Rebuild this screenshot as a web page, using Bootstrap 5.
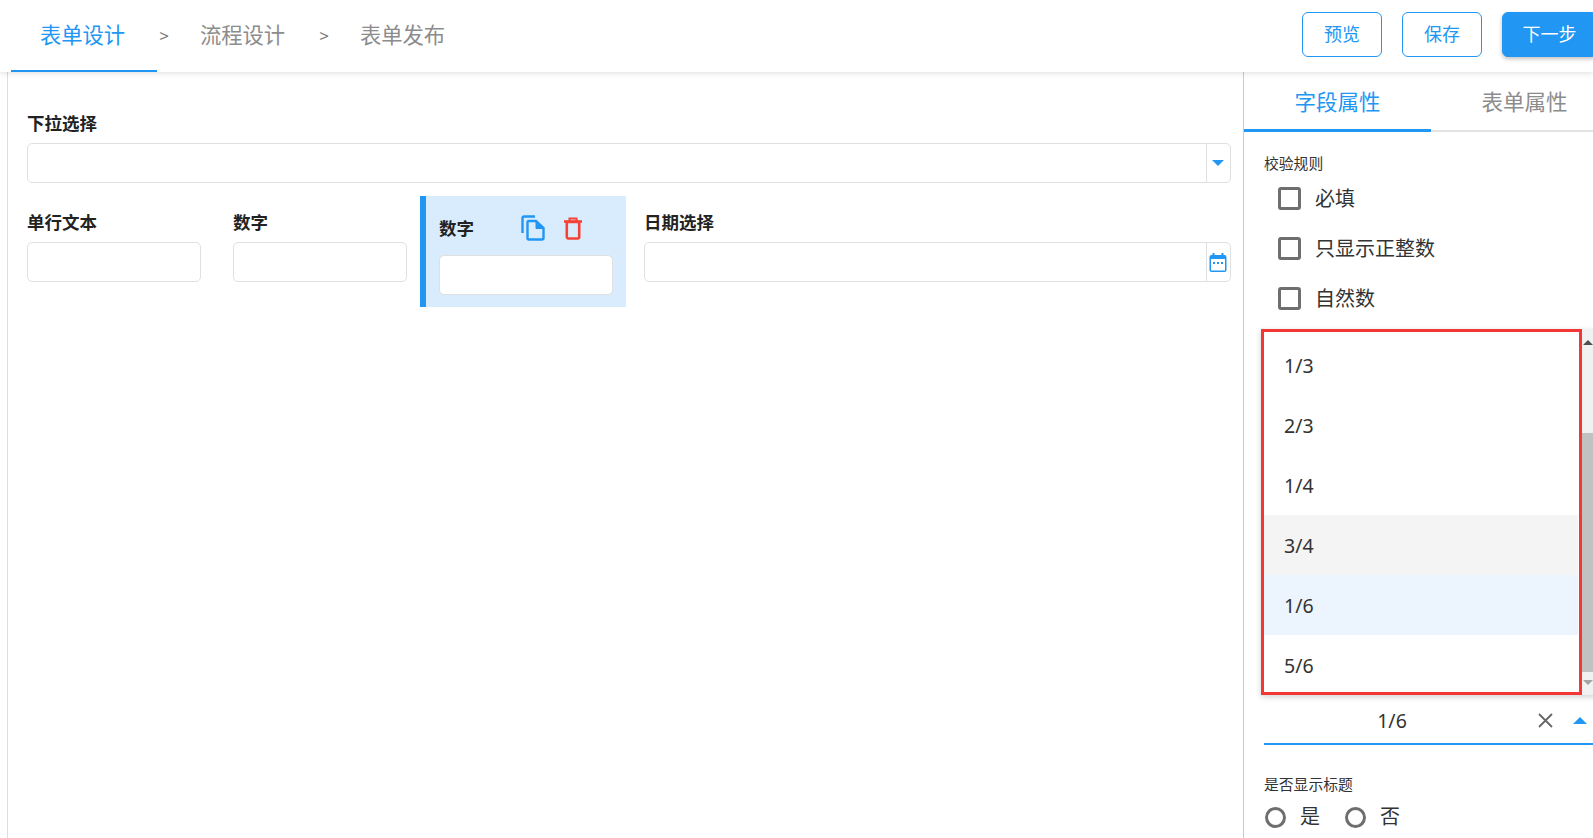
<!DOCTYPE html>
<html lang="zh-CN">
<head>
  <meta charset="UTF-8" />
  <meta name="viewport" content="width=device-width, initial-scale=1.0"/>
  <title>表单设计</title>
  <link href="https://cdn.jsdelivr.net/npm/bootstrap@5.3.0/dist/css/bootstrap.min.css" rel="stylesheet">
  <style>
    html, body { height: 838px; overflow: hidden; }
    body { font-family: "Noto Sans", "Noto Sans CJK SC", sans-serif; color: #333; background: #fff; }

    /* top bar */
    .top-bar { height: 72px; position: relative; z-index: 2; box-shadow: 0 1px 6px rgba(0,0,0,.14); padding-left: 11px; }
    .step-tab { width: 146px; height: 72px; line-height: 70px; padding-right: 3px; text-align: center; font-size: 21.3px; color: #8c8c8c; border-bottom: 2px solid transparent; }
    .step-tab.on { color: #2196f3; border-bottom-color: #2196f3; }
    .step-sep { width: 14px; text-align: center; font-size: 17px; color: #777; line-height: 72px; }
    .step-btn { width: 80px; height: 45px; margin-top: 12px; margin-left: 20px; padding: 0; font-size: 18px; border: 1px solid #2196f3; border-radius: 6px; color: #2196f3; background: #fff; }
    .step-btn.next { width: 95px; flex: none; margin-right: -4px; background: #2196f3; color: #fff; box-shadow: 0 2px 4px rgba(0,0,0,.25); }

    /* canvas */
    .work-area { height: 766px; }
    .canvas-pane { margin-left: 7px; width: 1236px; border-left: 1.5px solid #ddd; }
    .field-label { font-size: 17.5px; font-weight: 700; color: #222; line-height: 24px; }
    .field-box { height: 40px; border: 1px solid #e0e0e0; border-radius: 5px; padding: 0; box-shadow: none; }
    .addon-box { width: 25px; padding: 0 1px 0 0; justify-content: center; background: #fff; border-color: #e0e0e0; border-radius: 0 5px 5px 0; }
    .first-row { padding: 39px 12px 0 19px; }
    .first-row .field-label { margin-bottom: 8px; }
    .field-row { margin-top: 13px; }
    .field-cell { width: 206px; flex: none; height: 111px; padding: 14px 13px 0 19px; }
    .field-cell .field-label { margin-bottom: 8px; }
    .field-cell.wide { width: 618px; padding: 14px 13px 0 18px; }
    .field-cell.picked { background: #d9ecfd; border-left: 6px solid #2196f3; padding: 18px 13px 0 13px; }
    .field-cell.picked .field-label { width: 82px; margin-top: 0; margin-bottom: 0; }
    .field-tools { height: 28px; margin-bottom: 13px; }
    .trash-icon { margin-left: 18px; }
    .caret-down { width: 0; height: 0; border-left: 6px solid transparent; border-right: 6px solid transparent; border-top: 6px solid #2196f3; }

    /* side panel */
    .side-pane { width: 350px; flex: none; border-left: 1.5px solid #ccc; overflow: hidden; }
    .side-tabs { border-bottom: 2px solid #e3e3e3; height: 60px; }
    .side-tab { width: 187px; flex: none; height: 60px; line-height: 60px; margin-bottom: -2px; text-align: center; font-size: 21.5px; color: #8c8c8c; border-bottom: 3px solid transparent; }
    .side-tab.on { color: #2196f3; border-bottom-color: #2196f3; }
    .side-body { padding-left: 20px; width: 360px; }
    .prop-title { font-size: 14.8px; line-height: 20px; color: #333; }
    .rule-title { margin-top: 21px; }
    .rule-list { margin: 1px 0 0 14px; }
    .rule-item { height: 50px; margin: 0; padding: 0; gap: 14px; font-size: 20px; line-height: 22px; color: #333; }
    .rule-item .form-check-input { width: 23px; height: 23px; margin: -2px 0 0; float: none; border: 3px solid #6e6e6e; border-radius: 3px; box-shadow: none; flex: none; }

    .drop-wrap { margin-top: 5px; margin-left: -3px; height: 366px; box-shadow: 0 2px 6px rgba(0,0,0,.18); }
    .drop-list { width: 321px; flex: none; height: 366px; overflow: hidden; border: 3px solid #f33636; padding: 3px 1px 0 0; border-radius: 0; background: #fff; }
    .drop-list .list-group-item { height: 60px; flex: none; line-height: 62px; padding: 0 0 0 20px; font-size: 19.5px; color: #333; border: 0; background: transparent; }
    .drop-list .list-group-item.over { background: #f4f4f4; }
    .drop-list .list-group-item.cur { background: #ecf5fd; }
    .drop-bar { width: 14px; flex: none; background: #f1f1f1; padding-top: 104px; position: relative; }
    .drop-thumb { height: 239px; background: #c1c1c1; }
    .bar-arrow { position: absolute; left: 1px; width: 0; height: 0; border-left: 5px solid transparent; border-right: 5px solid transparent; }
    .bar-arrow.up { top: 11px; border-bottom: 5px solid #505050; }
    .bar-arrow.down { bottom: 10px; border-top: 5px solid #a3a3a3; }

    .value-field { height: 50px; padding-top: 2px; border-bottom: 2px solid #2196f3; font-size: 19.5px; color: #333; }
    .value-text { width: 256px; text-align: center; padding-top: 2px; }
    .value-clear { margin-left: 18px; }
    .caret-up { width: 0; height: 0; margin-left: 20px; border-left: 7px solid transparent; border-right: 7px solid transparent; border-bottom: 7px solid #2196f3; }
    .radio-title { margin-top: 29px; }
    .radio-row { margin-top: 12px; font-size: 20px; line-height: 22px; padding-left: 1px; }
    .radio-row label { gap: 14px; margin-right: 25px; }
    .radio-row .form-check-input { width: 21px; height: 21px; margin: 0; float: none; border: 3px solid #6e6e6e; box-shadow: none; flex: none; }
  </style>
</head>
<body>

<!-- top bar -->
<header class="top-bar d-flex bg-white">
  <div class="step-tab on">表单设计</div>
  <div class="step-sep">&gt;</div>
  <div class="step-tab">流程设计</div>
  <div class="step-sep">&gt;</div>
  <div class="step-tab">表单发布</div>
  <div class="ms-auto d-flex">
    <button class="btn step-btn" type="button">预览</button>
    <button class="btn step-btn" type="button">保存</button>
    <button class="btn step-btn next" type="button">下一步</button>
  </div>
</header>

<div class="work-area d-flex">
  <!-- form canvas -->
  <main class="canvas-pane">
    <div class="first-row">
      <div class="field-label">下拉选择</div>
      <div class="input-group">
        <input class="form-control field-box" type="text">
        <span class="input-group-text addon-box"><span class="caret-down"></span></span>
      </div>
    </div>

    <div class="field-row d-flex">
      <div class="field-cell">
        <div class="field-label">单行文本</div>
        <input class="form-control field-box" type="text">
      </div>
      <div class="field-cell">
        <div class="field-label">数字</div>
        <input class="form-control field-box" type="text">
      </div>
      <div class="field-cell picked">
        <div class="field-tools d-flex align-items-center">
          <div class="field-label">数字</div>
          <svg width="25" height="26" viewBox="0 0 25 26" fill="none" stroke="#2196f3" stroke-width="2.4">
            <path d="M14 1.5H3A1.5 1.5 0 0 0 1.5 3v15"/>
            <path d="M15 6H8a1.5 1.5 0 0 0-1.500 1.500V23A1.500 1.500 0 0 0 8 24.500h13a1.500 1.500 0 0 0 1.500-1.500V13z"/>
            <path d="M15 6l7.500 7.500H15z" fill="#2196f3" stroke-width="1"/>
          </svg>
          <svg class="trash-icon" width="18" height="23" viewBox="0 0 18 23" fill="none" stroke="#f44336" stroke-width="2.6">
            <path d="M0 4.500h18"/>
            <path d="M5.500 4V1.500h7V4" stroke-width="2"/>
            <rect x="2.800" y="5" width="12.400" height="16.500" rx="1.500"/>
          </svg>
        </div>
        <input class="form-control field-box" type="text">
      </div>
      <div class="field-cell wide">
        <div class="field-label">日期选择</div>
        <div class="input-group">
          <input class="form-control field-box" type="text">
          <span class="input-group-text addon-box">
            <svg width="18" height="19" viewBox="0 0 18 19">
              <rect x="0.500" y="2" width="17" height="17" rx="2" fill="#2196f3"/>
              <rect x="3.500" y="0" width="2" height="4" fill="#2196f3"/>
              <rect x="12.500" y="0" width="2" height="4" fill="#2196f3"/>
              <rect x="2" y="6" width="14" height="11.500" fill="#fff"/>
              <rect x="4" y="9" width="2" height="2" fill="#2196f3"/>
              <rect x="8" y="9" width="2" height="2" fill="#2196f3"/>
              <rect x="12" y="9" width="2" height="2" fill="#2196f3"/>
            </svg>
          </span>
        </div>
      </div>
    </div>
  </main>

  <!-- properties -->
  <aside class="side-pane">
    <div class="side-tabs d-flex">
      <div class="side-tab on">字段属性</div>
      <div class="side-tab">表单属性</div>
    </div>
    <div class="side-body">
      <div class="prop-title rule-title">校验规则</div>
      <div class="rule-list">
        <label class="rule-item d-flex align-items-center"><input class="form-check-input" type="checkbox">必填</label>
        <label class="rule-item d-flex align-items-center"><input class="form-check-input" type="checkbox">只显示正整数</label>
        <label class="rule-item d-flex align-items-center"><input class="form-check-input" type="checkbox">自然数</label>
      </div>

      <div class="drop-wrap d-flex">
        <ul class="list-group drop-list">
          <li class="list-group-item">1/3</li>
          <li class="list-group-item">2/3</li>
          <li class="list-group-item">1/4</li>
          <li class="list-group-item over">3/4</li>
          <li class="list-group-item cur">1/6</li>
          <li class="list-group-item">5/6</li>
        </ul>
        <div class="drop-bar">
          <span class="bar-arrow up"></span>
          <div class="drop-thumb"></div>
          <span class="bar-arrow down"></span>
        </div>
      </div>

      <div class="value-field d-flex align-items-center">
        <span class="value-text">1/6</span>
        <svg class="value-clear" width="15" height="15" viewBox="0 0 15 15" stroke="#666" stroke-width="1.800"><path d="M1 1l13 13M14 1L1 14"/></svg>
        <span class="caret-up"></span>
      </div>

      <div class="prop-title radio-title">是否显示标题</div>
      <div class="radio-row d-flex">
        <label class="d-flex align-items-center"><input class="form-check-input" type="radio" name="showTitle">是</label>
        <label class="d-flex align-items-center"><input class="form-check-input" type="radio" name="showTitle">否</label>
      </div>
    </div>
  </aside>
</div>

<script src="https://cdn.jsdelivr.net/npm/bootstrap@5.3.0/dist/js/bootstrap.bundle.min.js"></script>
</body>
</html>
